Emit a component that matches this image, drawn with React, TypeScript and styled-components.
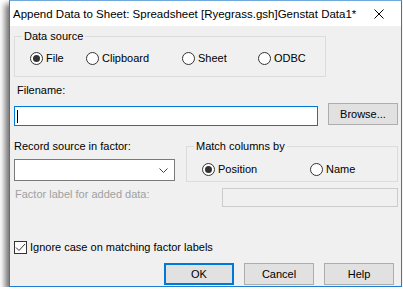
import React from "react";
import styled, { createGlobalStyle } from "styled-components";

const GlobalStyle = createGlobalStyle`
  html, body {
    margin: 0;
    padding: 0;
    background: #ffffff;
  }
  body {
    font-family: "Liberation Sans", Arial, sans-serif;
    font-size: 11px;
    color: #000;
  }
`;

const Window = styled.div`
  margin-left: 9px;
  width: 393px;
  height: 287px;
  box-sizing: border-box;
  border: 1px solid #1c7fd6;
  border-top-color: #6fa9de;
  background: #f0f0f0;
  box-shadow: -4px 4px 6px rgba(0, 0, 0, 0.55);
  display: flex;
  flex-direction: column;
`;

const TitleBar = styled.div`
  height: 25px;
  background: #ffffff;
  display: flex;
  align-items: center;
  padding-left: 3px;
`;

const Title = styled.span`
  flex: 1;
  font-size: 11.5px;
  white-space: nowrap;
`;

const CloseBox = styled.div`
  width: 46px;
  height: 25px;
  display: flex;
  align-items: center;
  justify-content: center;
`;

const Body = styled.div`
  flex: 1;
  display: flex;
  flex-direction: column;
  padding: 3px 3px 0 4px;
`;

const Group = styled.fieldset<{ $width: number; $height: number }>`
  margin: 0;
  padding: 0 0 0 15px;
  width: ${(p) => p.$width}px;
  height: ${(p) => p.$height}px;
  box-sizing: border-box;
  border: 1px solid #dcdcdc;
  min-width: 0;
`;

const Legend = styled.legend`
  padding: 0 2px;
  margin-left: -8px;
  line-height: 14px;
`;

const RadioRow = styled.div<{ $cols: string; $top: number }>`
  display: grid;
  grid-template-columns: ${(p) => p.$cols};
  margin-top: ${(p) => p.$top}px;
`;

const RadioItem = styled.label`
  display: flex;
  align-items: center;
  gap: 3px;
  line-height: 14px;
  white-space: nowrap;
`;

const RadioCircle = styled.span<{ $on?: boolean }>`
  width: 13px;
  height: 13px;
  box-sizing: border-box;
  border: 1px solid #333;
  border-radius: 50%;
  background: #fff;
  display: flex;
  align-items: center;
  justify-content: center;

  &::after {
    content: "";
    width: 7px;
    height: 7px;
    border-radius: 50%;
    background: ${(p) => (p.$on ? "#333" : "transparent")};
  }
`;

const Label = styled.div<{ $top: number; $left?: number; $disabled?: boolean }>`
  margin-top: ${(p) => p.$top}px;
  margin-left: ${(p) => p.$left ?? 0}px;
  line-height: 14px;
  color: ${(p) => (p.$disabled ? "#a0a0a0" : "#000")};
  white-space: nowrap;
`;

const InputRow = styled.div`
  display: flex;
  align-items: flex-start;
  margin-top: 6px;
`;

const TextBox = styled.div<{ $focused?: boolean }>`
  width: 304px;
  height: 20px;
  margin-top: 3px;
  box-sizing: border-box;
  border: 1px solid ${(p) => (p.$focused ? "#0078d7" : "#7a7a7a")};
  background: #fff;
  display: flex;
  align-items: center;
  padding-left: 2px;
`;

const Caret = styled.span`
  width: 1px;
  height: 13px;
  background: #000;
`;

const Button = styled.button<{ $default?: boolean }>`
  width: 70px;
  height: 22px;
  box-sizing: border-box;
  margin: 0;
  padding: 0;
  font: inherit;
  color: #000;
  background: #e1e1e1;
  border: ${(p) => (p.$default ? "2px solid #0078d7" : "1px solid #adadad")};
`;

const BrowseButton = styled(Button)`
  margin-left: 10px;
`;

const Middle = styled.div`
  display: flex;
  justify-content: space-between;
  margin-top: 13px;
`;

const Column = styled.div`
  display: flex;
  flex-direction: column;
`;

const RightColumn = styled(Column)`
  align-items: flex-end;
`;

const Combo = styled.div`
  width: 161px;
  height: 22px;
  margin-top: 6px;
  box-sizing: border-box;
  border: 1px solid #7a7a7a;
  background: #fff;
  display: flex;
  align-items: center;
  justify-content: flex-end;
  padding-right: 6px;
`;

const DisabledBox = styled.div`
  width: 176px;
  height: 19px;
  margin-top: 6px;
  box-sizing: border-box;
  border: 1px solid #cccccc;
  background: #f0f0f0;
`;

const CheckRow = styled.label`
  display: flex;
  align-items: center;
  gap: 3px;
  margin-top: 33px;
  line-height: 14px;
`;

const CheckBox = styled.span`
  width: 13px;
  height: 13px;
  box-sizing: border-box;
  border: 1px solid #333;
  background: #fff;
  display: flex;
  align-items: center;
  justify-content: center;
`;

const ButtonRow = styled.div`
  display: flex;
  justify-content: flex-end;
  gap: 10px;
  margin-top: 9px;
  padding-right: 4px;
`;

const Radio = ({ label, on }: { label: string; on?: boolean }) => (
  <RadioItem>
    <RadioCircle $on={on} />
    {label}
  </RadioItem>
);

export default function App() {
  return (
    <>
      <GlobalStyle />
      <Window>
        <TitleBar>
          <Title>Append Data to Sheet: Spreadsheet [Ryegrass.gsh]Genstat Data1*</Title>
          <CloseBox>
            <svg width="10" height="10" viewBox="0 0 10 10">
              <path d="M0.5 0.5L9.5 9.5M9.5 0.5L0.5 9.5" stroke="#000" strokeWidth="1" />
            </svg>
          </CloseBox>
        </TitleBar>
        <Body>
          <Group $width={312} $height={48}>
            <Legend>Data source</Legend>
            <RadioRow $cols="56px 96px 76px auto" $top={8}>
              <Radio label="File" on />
              <Radio label="Clipboard" />
              <Radio label="Sheet" />
              <Radio label="ODBC" />
            </RadioRow>
          </Group>
          <Label $top={6} $left={3}>Filename:</Label>
          <InputRow>
            <TextBox $focused>
              <Caret />
            </TextBox>
            <BrowseButton>Browse...</BrowseButton>
          </InputRow>
          <Middle>
            <Column>
              <Label $top={0}>Record source in factor:</Label>
              <Combo>
                <svg width="9" height="5" viewBox="0 0 9 5">
                  <path d="M0.5 0.5L4.5 4.5L8.5 0.5" stroke="#444" strokeWidth="1" fill="none" />
                </svg>
              </Combo>
              <Label $top={6} $left={1} $disabled>
                Factor label for added data:
              </Label>
            </Column>
            <RightColumn>
              <Group $width={212} $height={43}>
                <Legend>Match columns by</Legend>
                <RadioRow $cols="108px auto" $top={9}>
                  <Radio label="Position" on />
                  <Radio label="Name" />
                </RadioRow>
              </Group>
              <DisabledBox />
            </RightColumn>
          </Middle>
          <CheckRow>
            <CheckBox>
              <svg width="11" height="9" viewBox="0 0 11 9">
                <path d="M1 4.5L4 7.5L10 1" stroke="#333" strokeWidth="1" fill="none" />
              </svg>
            </CheckBox>
            Ignore case on matching factor labels
          </CheckRow>
          <ButtonRow>
            <Button $default>OK</Button>
            <Button>Cancel</Button>
            <Button>Help</Button>
          </ButtonRow>
        </Body>
      </Window>
    </>
  );
}
